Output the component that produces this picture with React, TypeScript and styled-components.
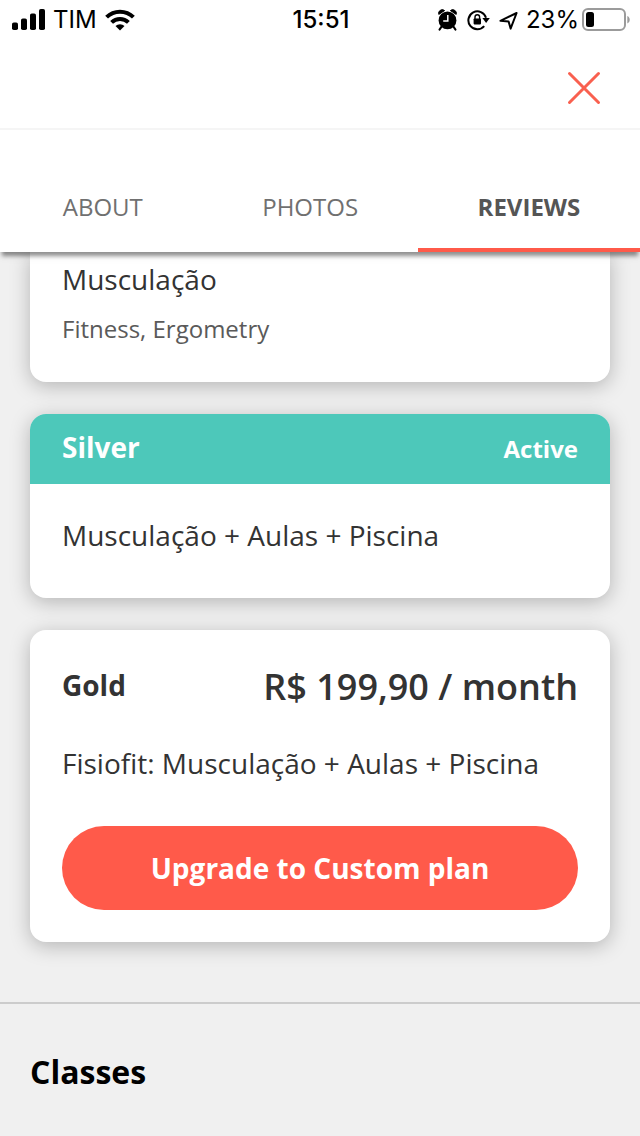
import React from "react";
import styled, { createGlobalStyle } from "styled-components";

const GlobalStyle = createGlobalStyle`
  * { box-sizing: border-box; }
  body { margin: 0; background: #f0f0f0; font-family: "Open Sans", sans-serif; color: #333; }
  h2, h3, p { margin: 0; }
  button { font-family: inherit; cursor: pointer; }
`;

const Page = styled.div`
  min-height: 100vh;
  background: #f0f0f0;
`;

const TopArea = styled.header`
  position: relative;
  background: #fff;
  box-shadow: 0 6px 4px -2px rgba(0, 0, 0, 0.4), 0 3px 10px rgba(0, 0, 0, 0.08);
`;

const StatusBar = styled.div`
  display: grid;
  grid-template-columns: 1fr auto 1fr;
  align-items: center;
  height: 40px;
  padding: 0 10px 0 12px;
  font-family: Inter, sans-serif;
  font-size: 24px;
  line-height: 28px;
  color: #000;
`;

const StatusGroup = styled.div<{ $end?: boolean }>`
  display: flex;
  align-items: center;
  justify-content: ${(p) => (p.$end ? "flex-end" : "flex-start")};
  gap: 8px;
`;

const Clock = styled.time`
  font-weight: 500;
`;

const Charge = styled.div`
  display: flex;
  align-items: center;
  gap: 3px;
`;

const NavBar = styled.div`
  display: flex;
  justify-content: flex-end;
  align-items: center;
  height: 90px;
  padding: 8px 38px 0 0;
  border-bottom: 2px solid #f5f5f5;
`;

const CloseButton = styled.button`
  display: flex;
  padding: 0;
  border: 0;
  background: none;
`;

const TabList = styled.div`
  display: flex;
  height: 122px;
  padding-left: 3px;
`;

const Tab = styled.button<{ $active?: boolean }>`
  flex: 1 1 auto;
  padding: 36px 0 0;
  border: 0;
  border-bottom: 4px solid ${(p) => (p.$active ? "#ff5a4a" : "transparent")};
  background: none;
  font-size: 24px;
  line-height: 32px;
  font-weight: ${(p) => (p.$active ? 700 : 400)};
  color: ${(p) => (p.$active ? "#555" : "#707070")};
`;

const Plans = styled.main`
  display: flex;
  flex-direction: column;
  gap: 32px;
  padding: 0 30px 60px;
`;

const Card = styled.article<{ $continued?: boolean }>`
  overflow: hidden;
  border-radius: ${(p) => (p.$continued ? "0 0 16px 16px" : "16px")};
  background: #fff;
  box-shadow: 0 4px 20px rgba(0, 0, 0, 0.25);
`;

const CardBody = styled.div<{ $top: number; $bottom: number }>`
  padding: ${(p) => p.$top}px 32px ${(p) => p.$bottom}px;
`;

const ActiveHeader = styled.div`
  display: flex;
  justify-content: space-between;
  align-items: baseline;
  padding: 14px 32px 18px;
  background: #4dc8ba;
  color: #fff;
`;

const PlanName = styled.h3<{ $tall?: boolean }>`
  font-size: 28px;
  line-height: ${(p) => (p.$tall ? 46 : 38)}px;
  font-weight: 700;
`;

const State = styled.span`
  font-size: 24px;
  line-height: 32px;
  font-weight: 700;
`;

const PriceRow = styled.div`
  display: flex;
  justify-content: space-between;
  align-items: flex-start;
  margin-bottom: 32px;
`;

const Price = styled.span`
  font-size: 36px;
  line-height: 50px;
  font-weight: 600;
`;

const PlanText = styled.p`
  font-size: 28px;
  line-height: 38px;
`;

const PlanNote = styled.p`
  margin-top: 15px;
  font-size: 24px;
  line-height: 32px;
  color: #5a5a5a;
`;

const UpgradeButton = styled.button`
  display: block;
  width: 100%;
  height: 84px;
  margin-top: 44px;
  padding: 0;
  border: 0;
  border-radius: 42px;
  background: #ff5a4a;
  color: #fff;
  font-size: 28px;
  line-height: 38px;
  font-weight: 700;
`;

const Classes = styled.section`
  padding: 46px 30px 40px;
  border-top: 2px solid #ccc;
`;

const SectionTitle = styled.h2`
  font-size: 32px;
  line-height: 44px;
  font-weight: 700;
  color: #000;
`;

const SignalIcon = () => (
  <svg width="33" height="22" viewBox="0 0 33 22" aria-hidden="true">
    <rect x="0" y="13.5" width="6" height="7.5" rx="1.8" />
    <rect x="9" y="9.5" width="6" height="11.5" rx="1.8" />
    <rect x="18" y="4.5" width="6" height="16.5" rx="1.8" />
    <rect x="27" y="0" width="6" height="21" rx="1.8" />
  </svg>
);

const WifiIcon = () => (
  <svg width="30" height="22" viewBox="0 0 30 22" aria-hidden="true">
    <g fill="none" stroke="#000" strokeWidth="4">
      <path d="M1.6 8.2a19 19 0 0 1 26.8 0" />
      <path d="M6.6 13.4a12 12 0 0 1 16.8 0" />
    </g>
    <path d="M15 21.6l-4.5-4.6a6.4 6.4 0 0 1 9 0z" />
  </svg>
);

const AlarmIcon = () => (
  <svg width="21" height="22" viewBox="0 0 21 22" aria-hidden="true">
    <path d="M.8 5.4A3.6 3.6 0 0 1 6.6 1.6zM18.2 5.4A3.6 3.6 0 0 0 12.4 1.6z" stroke="#000" strokeWidth="1" />
    <circle cx="9.5" cy="11.4" r="8.9" />
    <path d="M3.7 17.4L1.5 20.6M15.3 17.4l2.2 3.2" stroke="#000" strokeWidth="2" strokeLinecap="round" />
    <path d="M9.8 6v6H5.200" fill="none" stroke="#fff" strokeWidth="1.5" />
  </svg>
);

const RotationLockIcon = () => (
  <svg width="24" height="22" viewBox="0 0 24 22" aria-hidden="true">
    <path d="M17.2 17.2A9 9 0 1 1 19 8.8" fill="none" stroke="#000" strokeWidth="2" />
    <path d="M15.4 9h7.4l-3.7 5z" />
    <rect x="6.6" y="9.4" width="7.4" height="6" rx=".8" />
    <path d="M8 10.2V8a2.3 2.3 0 0 1 4.6 0v2.2" fill="none" stroke="#000" strokeWidth="1.4" />
  </svg>
);

const LocationIcon = () => (
  <svg width="19" height="20" viewBox="0 0 19 20" aria-hidden="true">
    <path d="M1.4 10.800L17.6 3l-6 15.600-2-7.200z" fill="none" stroke="#000" strokeWidth="2" strokeLinejoin="round" />
  </svg>
);

const BatteryIcon = () => (
  <svg width="48" height="24" viewBox="0 0 48 24" aria-hidden="true">
    <rect x="1" y="1" width="42" height="21" rx="5" fill="none" stroke="#9b9b9b" strokeWidth="2" />
    <path d="M45.3 8v7.4c1.5-.6 2.4-2 2.4-3.7s-.9-3.1-2.4-3.7z" fill="#9b9b9b" />
    <rect x="4" y="4" width="8" height="15" rx="2.5" />
  </svg>
);

const CloseIcon = () => (
  <svg width="36" height="36" viewBox="0 0 36 36" aria-hidden="true">
    <path d="M3.5 3.5l29 29M32.5 3.5l-29 29" stroke="#f9604f" strokeWidth="3" strokeLinecap="round" />
  </svg>
);

export default function App() {
  return (
    <Page>
      <GlobalStyle />
      <TopArea>
        <StatusBar>
          <StatusGroup>
            <SignalIcon />
            <span>TIM</span>
            <WifiIcon />
          </StatusGroup>
          <Clock>15:51</Clock>
          <StatusGroup $end>
            <AlarmIcon />
            <RotationLockIcon />
            <LocationIcon />
            <Charge>
              <span>23%</span>
              <BatteryIcon />
            </Charge>
          </StatusGroup>
        </StatusBar>
        <NavBar>
          <CloseButton type="button" aria-label="Close">
            <CloseIcon />
          </CloseButton>
        </NavBar>
        <TabList role="tablist">
          <Tab type="button" role="tab" aria-selected={false}>ABOUT</Tab>
          <Tab type="button" role="tab" aria-selected={false}>PHOTOS</Tab>
          <Tab type="button" role="tab" aria-selected $active>REVIEWS</Tab>
        </TabList>
      </TopArea>
      <Plans>
        <Card $continued>
          <CardBody $top={8} $bottom={37}>
            <PlanText>Musculação</PlanText>
            <PlanNote>Fitness, Ergometry</PlanNote>
          </CardBody>
        </Card>
        <Card>
          <ActiveHeader>
            <PlanName>Silver</PlanName>
            <State>Active</State>
          </ActiveHeader>
          <CardBody $top={32} $bottom={44}>
            <PlanText>Musculação + Aulas + Piscina</PlanText>
          </CardBody>
        </Card>
        <Card>
          <CardBody $top={32} $bottom={32}>
            <PriceRow>
              <PlanName $tall>Gold</PlanName>
              <Price>R$ 199,90 / month</Price>
            </PriceRow>
            <PlanText>Fisiofit: Musculação + Aulas + Piscina</PlanText>
            <UpgradeButton type="button">Upgrade to Custom plan</UpgradeButton>
          </CardBody>
        </Card>
      </Plans>
      <Classes>
        <SectionTitle>Classes</SectionTitle>
      </Classes>
    </Page>
  );
}
